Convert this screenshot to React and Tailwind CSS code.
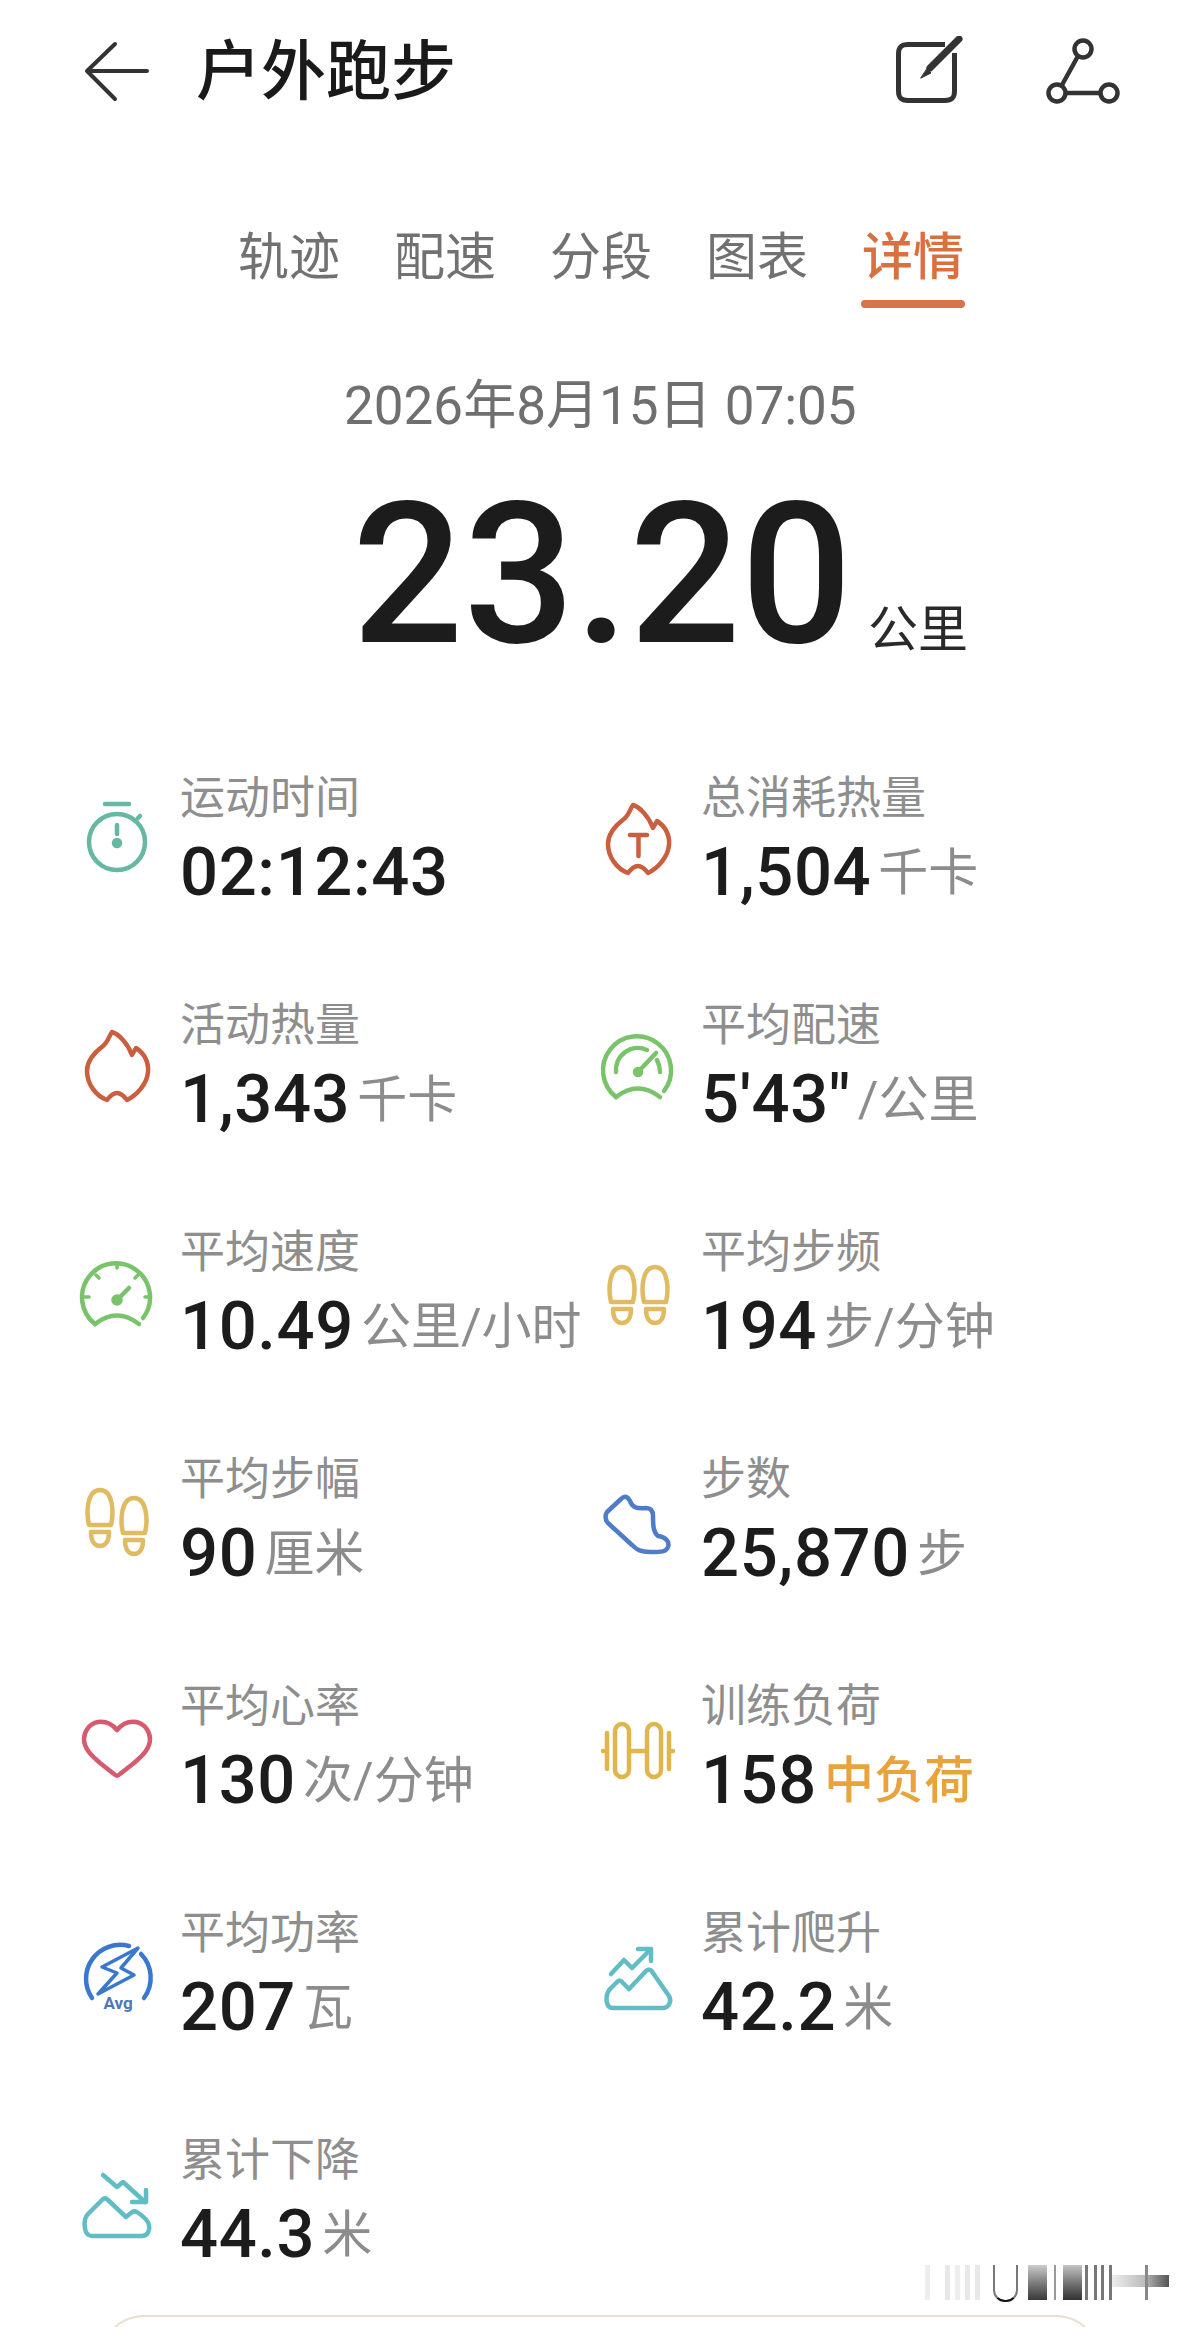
const FONT = "font-['Roboto','Noto_Sans_CJK_SC',sans-serif]"

function Icon({ color, children }) {
  return (
    <svg
      viewBox="-40 -40 80 80"
      width="80"
      height="80"
      fill="none"
      stroke={color}
      strokeWidth="4.5"
      strokeLinecap="round"
      strokeLinejoin="round"
      className="overflow-visible"
    >
      {children}
    </svg>
  )
}

const flame =
  "M-5,-38 C2,-36 11,-26 15,-15 L19,-22 C27,-17 32,-8 31,2 C30,14 20,25 10,30 C7,26 4,23 0,23 C-4,23 -7,26 -10,30 C-21,26 -30,14 -30,1 C-30,-10 -22,-18 -14,-24 C-9,-28 -8,-34 -5,-38 Z"

const gaugeOuter = "M-22,27 A34,34 0 1 1 26,21"
const gaugeBase = "M-22,27 Q0,10 22,27"

function Foot({ x, y }) {
  return (
    <g transform={`translate(${x},${y})`}>
      <path d="M-11,7 C-14,-6 -13,-28 0,-28 C13,-28 14,-6 11,7 Z" />
      <path d="M-9,14 H9 C9,24 5,28 0,28 C-5,28 -9,24 -9,14 Z" />
    </g>
  )
}

const icons = {
  timer: (
    <Icon color="#66b9a0">
      <path d="M-12,-39 H12" />
      <circle cx="0" cy="-1" r="28" />
      <path d="M21,-25 L23,-27" />
      <path d="M0,-18 V-9" />
      <circle cx="0" cy="0" r="3" fill="#66b9a0" />
    </Icon>
  ),
  flameT: (
    <Icon color="#c95f3f">
      <path d={flame} />
      <path d="M-8,-8 H9 M0.5,-8 V13" />
    </Icon>
  ),
  flame: (
    <Icon color="#c95f3f">
      <path d={flame} />
    </Icon>
  ),
  pace: (
    <Icon color="#79c36b">
      <path d={gaugeOuter} />
      <path d={gaugeBase} />
      <path d="M-22,2 A22,22 0 0 1 9,-20" />
      <path d="M19,-10 Q22,-4 22,2" />
      <path d="M0,2 L18,-17" />
      <circle cx="0" cy="2" r="3" fill="#79c36b" />
    </Icon>
  ),
  speed: (
    <Icon color="#79c36b">
      <path d={gaugeOuter} />
      <path d={gaugeBase} />
      <path d="M0,-34 V-29 M-21,-22 L-18,-19 M21,-22 L18,-19 M-33,0 H-28 M33,0 H28" strokeWidth="3.5" />
      <path d="M0,3 L12,-9" />
      <circle cx="0" cy="3" r="3.5" fill="#79c36b" />
    </Icon>
  ),
  feetEven: (
    <Icon color="#dfbb62">
      <Foot x={-16} y={-2} />
      <Foot x={17} y={-2} />
    </Icon>
  ),
  feetOffset: (
    <Icon color="#dfbb62">
      <Foot x={-17} y={-6} />
      <Foot x={17} y={2} />
    </Icon>
  ),
  shoe: (
    <Icon color="#4f7cc9">
      <path d="M-31,-12 L-17,-25 C-13,-29 -10,-27 -8,-23 C-6,-17 -2,-15 8,-16 C13,-16 15,-13 15,-8 C15,0 15,8 20,12 C27,13 32,17 30,23 C28,28 24,28 12,28 C3,28 -1,26 -6,21 L-30,-1 C-33,-4 -33,-9 -31,-12 Z" />
    </Icon>
  ),
  heart: (
    <Icon color="#d65b6f">
      <path d="M0,-21 C5,-27 12,-30 19,-29 C29,-27 33,-18 33,-12 C33,-2 25,5 17,12 L3,23 C1,25 -1,25 -3,23 L-17,12 C-25,5 -33,-2 -33,-12 C-33,-18 -29,-27 -19,-29 C-12,-30 -5,-27 0,-21 Z" />
    </Icon>
  ),
  power: (
    <Icon color="#3a78d0">
      <path d="M12,-32 A34,34 0 0 0 -25,20" />
      <path d="M24,-24 A34,34 0 0 1 27,20" />
      <path d="M21,-30 L-15,-11 L0,-5 L-19,16 L17,-3 L4,-10 Z" strokeWidth="3.5" />
      <text
        x="1"
        y="31"
        textAnchor="middle"
        fontSize="17"
        fontWeight="700"
        fill="#4c78b8"
        stroke="none"
        fontFamily="Roboto, sans-serif"
      >
        Avg
      </text>
    </Icon>
  ),
  dumbbell: (
    <Icon color="#dfb64e">
      <rect x="-23" y="-27" width="14" height="53" rx="7" />
      <rect x="9" y="-27" width="14" height="53" rx="7" />
      <path d="M-9,0 H9" />
      <path d="M-31,-18 V18 M31,-18 V18" />
      <path d="M-35,0 H-34 M34,0 H35" />
    </Icon>
  ),
  climb: (
    <Icon color="#62bcc4">
      <path d="M-25,30 H25 C31,30 34,23 31,18 L15,-5 C13,-9 10,-9 8,-7 L-9,11 L-15,5 C-17,2 -19,2 -21,4 L-28,11 C-33,17 -33,30 -25,30 Z" />
      <path d="M-27,-4 L-14,-18 L-6,-10 L12,-28" />
      <path d="M0,-29 H13 V-17" />
    </Icon>
  ),
  descent: (
    <Icon color="#62bcc4">
      <path d="M-25,31 H25 C31,31 33,25 32,20 C31,15 26,11 20,7 C18,6 16,6 14,8 L9,12 L-9,-5 C-11,-7 -13,-7 -15,-5 L-29,9 C-34,14 -34,31 -25,31 Z" />
      <path d="M-14,-30 L0,-18 L6,-23 L28,-3" />
      <path d="M15,-3 H29 V-15" />
    </Icon>
  ),
}

const stats = [
  { icon: "timer", label: "运动时间", value: "02:12:43" },
  { icon: "flameT", label: "总消耗热量", value: "1,504", unit: "千卡" },
  { icon: "flame", label: "活动热量", value: "1,343", unit: "千卡" },
  { icon: "pace", label: "平均配速", value: `5'43"`, unit: "/公里" },
  { icon: "speed", label: "平均速度", value: "10.49", unit: "公里/小时" },
  { icon: "feetEven", label: "平均步频", value: "194", unit: "步/分钟" },
  { icon: "feetOffset", label: "平均步幅", value: "90", unit: "厘米" },
  { icon: "shoe", label: "步数", value: "25,870", unit: "步" },
  { icon: "heart", label: "平均心率", value: "130", unit: "次/分钟" },
  { icon: "dumbbell", label: "训练负荷", value: "158", unit: "中负荷", accent: true },
  { icon: "power", label: "平均功率", value: "207", unit: "瓦" },
  { icon: "climb", label: "累计爬升", value: "42.2", unit: "米" },
  { icon: "descent", label: "累计下降", value: "44.3", unit: "米" },
]

const tabs = ["轨迹", "配速", "分段", "图表", "详情"]

function Stat({ stat }) {
  return (
    <div className="flex h-[227px] items-center gap-[24px]">
      <div className="mt-[14px] flex w-[78px] shrink-0 justify-center">{icons[stat.icon]}</div>
      <div className="mt-[8px]">
        <p className="h-[62px] text-[45px] leading-[62px] text-[#8e8e8e]">{stat.label}</p>
        <p className="mt-[4px] flex h-[78px] items-center whitespace-nowrap leading-none">
          <span className="text-[67px] font-medium tracking-[0.6px] text-[#1c1c1c]">{stat.value}</span>
          {stat.unit && (
            <span
              className={
                stat.accent
                  ? "ml-[7px] text-[50px] font-medium text-[#e8a33a]"
                  : "ml-[7px] text-[50px] text-[#8c8c8c]"
              }
            >
              {stat.unit}
            </span>
          )}
        </p>
      </div>
    </div>
  )
}

export default function App() {
  return (
    <div className={`relative h-[2327px] w-[1200px] overflow-hidden bg-white ${FONT}`}>
      <header className="flex h-[144px] items-center pl-[84px] pr-[78px]">
        <svg viewBox="0 0 66 72" width="66" height="72" fill="none" stroke="#333333" strokeWidth="4" strokeLinecap="round" strokeLinejoin="round" className="shrink-0">
          <path d="M31,8 L3,35 L31,63 M3,35 H63" />
        </svg>
        <h1 className="ml-[46px] text-[65px] font-medium leading-none text-[#1a1a1a]">户外跑步</h1>
        <div className="ml-auto flex items-center gap-[80px]">
          <svg viewBox="0 0 72 72" width="72" height="72" fill="none" stroke="#333333" strokeWidth="5" strokeLinecap="round">
            <path d="M53,8.5 H16 C9,8.5 6.5,11 6.5,18 V55 C6.5,62 9,64.5 16,64.5 H53 C60,64.5 62.5,62 62.5,55 V17" strokeLinecap="butt" />
            <path d="M38,32 L67,3" strokeWidth="7" />
            <path d="M35,33 L39,37 L29,42 Z" fill="#333333" strokeWidth="1" />
          </svg>
          <svg viewBox="0 0 78 72" width="78" height="72" fill="none" stroke="#333333" strokeWidth="4.5">
            <circle cx="39" cy="13" r="8.5" />
            <circle cx="13" cy="57" r="8.5" />
            <circle cx="65" cy="57" r="8.5" />
            <path d="M34,20 L18,49 M22,57 H56" />
          </svg>
        </div>
      </header>

      <nav className="ml-[238px] mt-[87px] flex gap-[54px]">
        {tabs.map((tab, index) => (
          <div key={tab} className="flex w-[102px] flex-col items-center">
            <span
              className={
                index === 4
                  ? "h-[54px] whitespace-nowrap text-[51px] font-medium leading-[54px] text-[#d9703f]"
                  : "h-[54px] whitespace-nowrap text-[51px] leading-[54px] text-[#717171]"
              }
            >
              {tab}
            </span>
            <span
              className={
                index === 4
                  ? "mt-[15px] h-[8px] w-[104px] shrink-0 rounded-full bg-[#d9734a]"
                  : "mt-[15px] h-[8px] shrink-0"
              }
            />
          </div>
        ))}
      </nav>

      <p className="ml-[344px] mt-[68px] h-[60px] whitespace-nowrap text-[53px] leading-[60px] text-[#6f6f6f]">
        2026年8月15日 07:05
      </p>

      <div className="ml-[352px] mt-[41px] flex h-[196px] items-center whitespace-nowrap">
        <span className="text-[196px] font-medium leading-none text-[#1c1c1c]">23.20</span>
        <span className="ml-[16px] mt-[110px] text-[50px] leading-none text-[#2a2a2a]">公里</span>
      </div>

      <main className="ml-[78px] mt-[49px] grid grid-cols-[521px_521px]">
        {stats.map((stat) => (
          <Stat key={stat.label} stat={stat} />
        ))}
      </main>

      <div className="mx-[100px] mt-[4px] h-[100px] rounded-t-[44px] border-2 border-[#e9dfcf]" />

      {/* blurred watermark in the bottom corner */}
      <div className="absolute left-[925px] top-[2265px] flex h-[35px] items-stretch">
        <div className="w-[5px] bg-[#eeeeee]" />
        <div className="ml-[15px] w-[5px] bg-[#e8e8e8]" />
        <div className="ml-[5px] w-[5px] bg-[#eeeeee]" />
        <div className="ml-[5px] w-[5px] bg-[#e8e8e8]" />
        <div className="ml-[5px] w-[5px] bg-[#e8e8e8]" />
        <div className="ml-[13px] h-[37px] w-[25px] rounded-b-[12px] border-x-2 border-b-2 border-[#777777] border-b-[#111111] bg-white" />
        <div className="ml-[10px] w-[19px] bg-gradient-to-b from-[#cccccc] to-[#3a3a3a]" />
        <div className="ml-[7px] w-[2px] bg-[#999999]" />
        <div className="ml-[7px] w-[19px] bg-gradient-to-b from-[#c4c4c4] to-[#333333]" />
        <div className="ml-[3px] w-[3px] bg-[#777777]" />
        <div className="ml-[6px] w-[3px] bg-[#777777]" />
        <div className="ml-[4px] w-[3px] bg-[#777777]" />
        <div className="ml-[5px] w-[3px] bg-[#777777]" />
        <div className="mb-[13px] mt-[10px] w-[33px] bg-gradient-to-r from-[#eeeeee] to-[#bbbbbb]" />
        <div className="w-[3px] bg-[#888888]" />
        <div className="mb-[13px] mt-[10px] w-[21px] bg-gradient-to-r from-[#aaaaaa] to-[#555555]" />
      </div>
    </div>
  )
}
